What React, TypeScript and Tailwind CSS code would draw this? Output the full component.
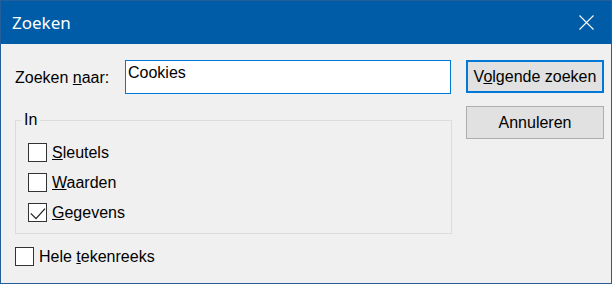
const Checkbox = ({ checked = false }: { checked?: boolean }) => (
  <span className="flex h-[19px] w-[19px] shrink-0 items-center justify-center border border-[#333333] bg-white">
    {checked && (
      <svg width="17" height="17" viewBox="0 0 17 17" fill="none">
        <path d="M1.8 9.4L7 14.6L16 4.6" stroke="#222" strokeWidth="1.3" />
      </svg>
    )}
  </span>
)

const Option = ({
  before = "",
  hotkey,
  rest,
  checked,
}: {
  before?: string
  hotkey: string
  rest: string
  checked?: boolean
}) => (
  <div className="flex h-[19px] items-center gap-[5px]">
    <Checkbox checked={checked} />
    <span className="whitespace-pre leading-[18px]">
      {before}
      <span className="underline">{hotkey}</span>
      {rest}
    </span>
  </div>
)

export default function App() {
  return (
    <div className="flex h-[284px] w-[612px] flex-col border border-[#245f9c] bg-[#f0f0f0] font-['Liberation_Sans',Arial,sans-serif] text-[16px] text-black">
      {/* Title bar */}
      <div className="flex h-[43px] shrink-0 items-center justify-between bg-[#005ca7] pl-[11px] pr-[17px] pt-[1px]">
        <span className="font-['Segoe_UI','Noto_Sans',sans-serif] text-[17px] leading-[20px] text-white">
          Zoeken
        </span>
        <svg width="15" height="15" viewBox="0 0 15 15" className="-mt-[1px]">
          <path d="M0.5 0.5L14.5 14.5M14.5 0.5L0.5 14.5" stroke="#ffffff" strokeWidth="1.1" />
        </svg>
      </div>

      {/* Body */}
      <div className="flex pl-[14px] pt-[16px]">
        <div className="flex w-[437px] flex-col">
          <div className="flex">
            <label className="w-[110px] pt-[9px] leading-[18px]">
              Zoeken <span className="underline">n</span>aar:
            </label>
            <input
              readOnly
              value="Cookies"
              className="h-[34px] w-[326px] border border-[#0078d7] bg-white px-[2px] pb-[12px] pt-[3px] leading-[18px] outline-none"
            />
          </div>

          <div className="relative mt-[26px] flex h-[114px] flex-col gap-[11px] border border-[#dcdcdc] pl-[12px] pt-[22px]">
            <span className="absolute -top-[10px] left-[5px] bg-[#f0f0f0] px-[3px] leading-[18px]">
              In
            </span>
            <Option hotkey="S" rest="leutels" />
            <Option hotkey="W" rest="aarden" />
            <Option hotkey="G" rest="egevens" checked />
          </div>

          <div className="mt-[13px]">
            <Option before="Hele " hotkey="t" rest="ekenreeks" />
          </div>
        </div>

        <div className="ml-[14px] flex w-[138px] flex-col gap-[13px]">
          <button className="h-[33px] border-2 border-[#0078d7] bg-[#e1e1e1] leading-[18px]">
            V<span className="underline">o</span>lgende zoeken
          </button>
          <button className="h-[33px] border border-[#adadad] bg-[#e1e1e1] leading-[18px]">
            Annuleren
          </button>
        </div>
      </div>
    </div>
  )
}
